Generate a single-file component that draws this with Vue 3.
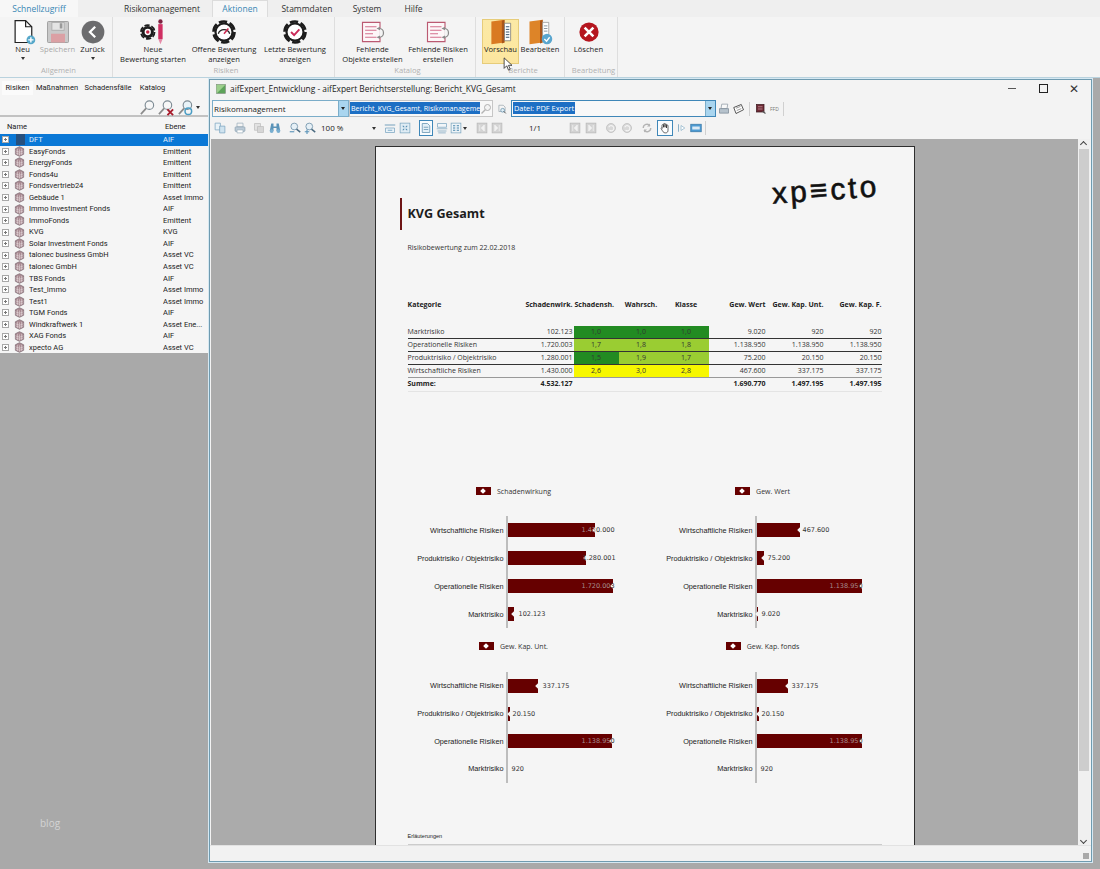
<script setup>
const tabs = ['Risikomanagement', 'Aktionen', 'Stammdaten', 'System', 'Hilfe']

const groups = [
  { name: 'Allgemein', cls: 'g1', btns: [
    { icon: 'neu', lines: ['Neu'], w: 35, arrow: true },
    { icon: 'save', lines: ['Speichern'], w: 35, off: true },
    { icon: 'back', lines: ['Zurück'], w: 35, arrow: true },
  ] },
  { name: 'Risiken', cls: 'g2', btns: [
    { icon: 'gearpen', lines: ['Neue', 'Bewertung starten'], w: 70 },
    { icon: 'open', lines: ['Offene Bewertung', 'anzeigen'], w: 72 },
    { icon: 'last', lines: ['Letzte Bewertung', 'anzeigen'], w: 70 },
  ] },
  { name: 'Katalog', cls: 'g3', btns: [
    { icon: 'missing', lines: ['Fehlende', 'Objekte erstellen'], w: 65 },
    { icon: 'missing', lines: ['Fehlende Risiken', 'erstellen'], w: 66 },
  ] },
  { name: 'Berichte', cls: 'g4', btns: [
    { icon: 'book', lines: ['Vorschau'], w: 37, hot: true },
    { icon: 'bookedit', lines: ['Bearbeiten'], w: 42 },
  ] },
  { name: 'Bearbeitung', cls: 'g5', btns: [
    { icon: 'del', lines: ['Löschen'], w: 37 },
  ] },
]

const tree = [
  ['DFT', 'AIF'], ['EasyFonds', 'Emittent'], ['EnergyFonds', 'Emittent'], ['Fonds4u', 'Emittent'],
  ['Fondsvertrieb24', 'Emittent'], ['Gebäude 1', 'Asset Immo'], ['Immo Investment Fonds', 'AIF'],
  ['ImmoFonds', 'Emittent'], ['KVG', 'KVG'], ['Solar Investment Fonds', 'AIF'],
  ['talonec business GmbH', 'Asset VC'], ['talonec GmbH', 'Asset VC'], ['TBS Fonds', 'AIF'],
  ['Test_Immo', 'Asset Immo'], ['Test1', 'Asset Immo'], ['TGM Fonds', 'AIF'],
  ['Windkraftwerk 1', 'Asset Ene...'], ['XAG Fonds', 'AIF'], ['xpecto AG', 'Asset VC'],
]

const rawBar = [
  { x: 215, w: 12, icon: 'copy' }, { x: 235, w: 12, icon: 'print' }, { x: 254, w: 12, icon: 'pages', dim: true },
  { x: 270, w: 12, icon: 'binoc' }, { x: 290, w: 12, icon: 'zoomout' }, { x: 305, w: 12, icon: 'zoomin' },
  { x: 322, w: 50, text: '100 %' }, { x: 373, w: 5, caret: true },
  { x: 385, w: 12, icon: 'fitw' }, { x: 400, w: 12, icon: 'fitp' },
  { x: 420, w: 14, icon: 'single', active: true }, { x: 437, w: 12, icon: 'facing' }, { x: 451, w: 12, icon: 'multi' },
  { x: 464, w: 5, caret: true }, { x: 477, w: 12, icon: 'first', dim: true }, { x: 492, w: 12, icon: 'next', dim: true },
  { x: 530, w: 14, text: '1/1' }, { x: 570, w: 12, icon: 'first', dim: true }, { x: 586, w: 12, icon: 'next', dim: true },
  { x: 606, w: 12, icon: 'undo', dim: true }, { x: 622, w: 12, icon: 'undo', dim: true },
  { x: 642, w: 12, icon: 'refresh', dim: true }, { x: 658, w: 16, icon: 'hand', active: true },
  { x: 677, w: 10, icon: 'sel' }, { x: 691, w: 12, icon: 'snap' }, { x: 706, w: 1, sep: true },
]
const bar = rawBar.map((it, i) => ({
  ...it,
  gap: it.x - (i ? rawBar[i - 1].x + rawBar[i - 1].w : 211),
}))

const head = ['Kategorie', 'Schadenwirk.', 'Schadensh.', 'Wahrsch.', 'Klasse', 'Gew. Wert', 'Gew. Kap. Unt.', 'Gew. Kap. F.']
const rows = [
  { cat: 'Marktrisiko', sw: '102.123', a: ['1,0', 'd'], b: ['1,0', 'd'], c: ['1,0', 'd'], w: '9.020', u: '920', f: '920' },
  { cat: 'Operationelle Risiken', sw: '1.720.003', a: ['1,7', 'l'], b: ['1,8', 'l'], c: ['1,8', 'l'], w: '1.138.950', u: '1.138.950', f: '1.138.950' },
  { cat: 'Produktrisiko / Objektrisiko', sw: '1.280.001', a: ['1,5', 'd'], b: ['1,9', 'l'], c: ['1,7', 'l'], w: '75.200', u: '20.150', f: '20.150' },
  { cat: 'Wirtschaftliche Risiken', sw: '1.430.000', a: ['2,6', 'y'], b: ['3,0', 'y'], c: ['2,8', 'y'], w: '467.600', u: '337.175', f: '337.175' },
]

const L = ['Wirtschaftliche Risiken', 'Produktrisiko / Objektrisiko', 'Operationelle Risiken', 'Marktrisiko']
const mk = (title, data) => ({
  title,
  rows: data.map((d, i) => ({
    label: L[i], w: d[0], v: d[1], gap: d[2] - d[0],
    inner: d[1].slice(0, d[3] || 0), outer: d[1].slice(d[3] || 0),
  })),
})
const charts = [
  mk('Schadenwirkung', [[87, '1.430.000', 74, 4], [78, '1.280.001', 75, 0], [105, '1.720.003', 74, 8], [6, '102.123', 11, 0]]),
  mk('Gew. Wert', [[43, '467.600', 46, 0], [7, '75.200', 11, 0], [105, '1.138.950', 73, 8], [1, '9.020', 5, 0]]),
  mk('Gew. Kap. Unt.', [[30, '337.175', 35, 0], [2, '20.150', 5, 0], [104, '1.138.950', 74, 8], [0, '920', 4, 0]]),
  mk('Gew. Kap. fonds', [[31, '337.175', 35, 0], [2, '20.150', 5, 0], [105, '1.138.950', 73, 8], [0, '920', 4, 0]]),
]
</script>

<template>
  <div class="desktop">
    <svg class="defs" xmlns="http://www.w3.org/2000/svg">
      <symbol id="i-neu" viewBox="0 0 32 32">
        <path d="M7 3h12l7 7v18H7z" fill="#fff" stroke="#222" stroke-width="1.4"/>
        <path d="M19 3v7h7" fill="none" stroke="#222" stroke-width="1.4"/>
        <circle cx="25" cy="25" r="5" fill="#55a7c9"/>
        <path d="M25 22v6M22 25h6" stroke="#fff" stroke-width="1.6"/>
      </symbol>
      <symbol id="i-save" viewBox="0 0 32 32">
        <rect x="4" y="4" width="24" height="24" rx="1" fill="#c9c9c9" stroke="#9a9a9a"/>
        <rect x="9" y="5" width="14" height="9" fill="#e4e4e4" stroke="#aaa"/>
        <rect x="18" y="6" width="3" height="6" fill="#999"/>
        <rect x="8" y="18" width="16" height="10" fill="#dba0a4"/>
      </symbol>
      <symbol id="i-back" viewBox="0 0 32 32">
        <circle cx="16" cy="16" r="13" fill="#6c6c6e"/>
        <path d="M18.500 10l-6 6 6 6" fill="none" stroke="#fff" stroke-width="2.600"/>
      </symbol>
      <symbol id="i-gearpen" viewBox="0 0 32 32">
        <circle cx="10" cy="16" r="7" fill="#1c1c1c"/>
        <circle cx="10" cy="16" r="7.800" fill="none" stroke="#1c1c1c" stroke-width="2" stroke-dasharray="6 2.170"/>
        <circle cx="10" cy="16" r="3.600" fill="#fff"/>
        <circle cx="10" cy="16" r="2" fill="#c22a4a"/>
        <rect x="22" y="7" width="5" height="17" fill="#cf2f62"/>
        <circle cx="24.500" cy="4" r="2.500" fill="#7c2340"/>
        <path d="M22 24h5l-2.500 6z" fill="#e58aa8"/>
      </symbol>
      <symbol id="i-open" viewBox="0 0 32 32">
        <circle cx="16" cy="16" r="11" fill="#1c1c1c"/>
        <circle cx="16" cy="16" r="12" fill="none" stroke="#1c1c1c" stroke-width="3" stroke-dasharray="9.500 3.070"/>
        <circle cx="16" cy="16" r="8.500" fill="#fff"/>
        <path d="M9.500 18a6.800 6.800 0 0 1 13 0" fill="none" stroke="#222" stroke-width="1.500"/>
        <path d="M16 18l5-6" stroke="#d02a52" stroke-width="1.800"/>
      </symbol>
      <symbol id="i-last" viewBox="0 0 32 32">
        <circle cx="16" cy="16" r="11" fill="#1c1c1c"/>
        <circle cx="16" cy="16" r="12" fill="none" stroke="#1c1c1c" stroke-width="3" stroke-dasharray="9.500 3.070"/>
        <circle cx="16" cy="16" r="8.500" fill="#fff"/>
        <path d="M11.500 16l3.500 3.500 6-6.500" fill="none" stroke="#c92a58" stroke-width="2.200"/>
      </symbol>
      <symbol id="i-missing" viewBox="0 0 32 32">
        <path d="M4 5h20v22H4z" fill="#fdf7f8" stroke="#bb5a72" stroke-width="1.300"/>
        <path d="M7 10h13M7 14h13M7 18h9M7 22h13" stroke="#d4708c" stroke-width="1.300"/>
        <path d="M23 12a5 5 0 0 1 5 5 5 5 0 0 1-5 5" fill="#f4f4f4" stroke="#8a8a8a" stroke-width="1.400"/>
        <path d="M20 12l4-2v4zM20 22l4-2v4z" fill="#8a8a8a"/>
      </symbol>
      <symbol id="i-book" viewBox="0 0 32 32">
        <path d="M5 4l15-2v26L5 30z" fill="#d97a22"/>
        <path d="M20 2v26l-3 1V3z" fill="#a9551a"/>
        <path d="M20 6h7v20h-7z" fill="#fff" stroke="#6b6b6b" stroke-width=".8"/>
        <path d="M21.500 10h4M21.500 13h4M21.500 16h4M21.500 19h4M21.500 22h4" stroke="#34506b" stroke-width="1.100"/>
      </symbol>
      <symbol id="i-bookedit" viewBox="0 0 32 32">
        <path d="M4 4l15-2v26L4 30z" fill="#dd8428"/>
        <path d="M19 2v26l-3 1V3z" fill="#a9551a"/>
        <path d="M19 5h7v18h-7z" fill="#fff" stroke="#8a8a8a" stroke-width=".8"/>
        <path d="M20.500 9h4M20.500 12h4M20.500 15h4" stroke="#7a8a99"/>
        <circle cx="24" cy="24" r="6" fill="#5aa6cf"/>
        <path d="M21 24l2.500 2.500 3.500-4.500" fill="none" stroke="#fff" stroke-width="1.500"/>
      </symbol>
      <symbol id="i-del" viewBox="0 0 32 32">
        <circle cx="16" cy="16" r="11" fill="#b5161f"/>
        <path d="M11 11l10 10M21 11L11 21" stroke="#fff" stroke-width="3"/>
      </symbol>
      <symbol id="i-cube" viewBox="0 0 16 16">
        <path d="M2 4l6-3 6 3v8l-6 3-6-3z" fill="#a98a92" stroke="#76626a"/>
        <path d="M8 5v9M5 4v9M11 4v9M2 7l6 2 6-2M2 10l6 2 6-2" stroke="#ece4e6" stroke-width=".7" fill="none"/>
      </symbol>
      <symbol id="i-lens" viewBox="0 0 18 18">
        <circle cx="11" cy="6.500" r="4.500" fill="#f7f7f7" stroke="#7d8b94" stroke-width="1.200"/>
        <path d="M7.500 10L2 16" stroke="#8b8b8b" stroke-width="1.800"/>
      </symbol>
      <symbol id="i-lensx" viewBox="0 0 18 18">
        <circle cx="10" cy="6.500" r="4.500" fill="#f7f7f7" stroke="#7d8b94" stroke-width="1.200"/>
        <path d="M6.500 10L1 16" stroke="#8b8b8b" stroke-width="1.800"/>
        <path d="M10 11l6 6M16 11l-6 6" stroke="#a81c2c" stroke-width="2"/>
      </symbol>
      <symbol id="i-lensb" viewBox="0 0 18 18">
        <circle cx="11" cy="6.500" r="4.500" fill="#e9f3f8" stroke="#7d8b94" stroke-width="1.200"/>
        <path d="M7.500 10L2 16" stroke="#8b8b8b" stroke-width="1.800"/>
        <circle cx="12" cy="13" r="3.500" fill="none" stroke="#4b9dc4" stroke-width="1.600"/>
      </symbol>
      <symbol id="i-copy" viewBox="0 0 16 16">
        <path d="M1.500 1.500h7v9h-7z" fill="#eaf3f8" stroke="#7ca6c0"/>
        <path d="M7.500 5.500h7v9h-7z" fill="#cfe3ef" stroke="#7ca6c0"/>
      </symbol>
      <symbol id="i-print" viewBox="0 0 16 16">
        <path d="M4 1.500h8v5H4z" fill="#f4f4f4" stroke="#9db0be"/>
        <rect x="1.500" y="6.500" width="13" height="6" rx="1" fill="#bccbd7" stroke="#8ba0b0"/>
        <path d="M4 10.500h8v4H4z" fill="#fff" stroke="#9db0be"/>
      </symbol>
      <symbol id="i-pages" viewBox="0 0 16 16">
        <path d="M2 2h8v9H2z" fill="#e2e2e2" stroke="#bdbdbd"/>
        <path d="M6 6h8v8H6z" fill="#d6d6d6" stroke="#bdbdbd"/>
      </symbol>
      <symbol id="i-binoc" viewBox="0 0 16 16">
        <path d="M3 2h3v4h4V2h3l2 10h-5V8H6v4H1z" fill="#5a93b8"/>
        <circle cx="3.500" cy="12" r="2.500" fill="#78aed0"/>
        <circle cx="12.500" cy="12" r="2.500" fill="#78aed0"/>
      </symbol>
      <symbol id="i-zoomout" viewBox="0 0 16 16">
        <circle cx="7" cy="6" r="4.500" fill="#e6f0f6" stroke="#7899af" stroke-width="1.200"/>
        <path d="M10 9.500l5 4" stroke="#4a6a80" stroke-width="1.800"/>
        <path d="M1 13h6" stroke="#5a93b8" stroke-width="1.500"/>
      </symbol>
      <symbol id="i-zoomin" viewBox="0 0 16 16">
        <circle cx="7" cy="6" r="4.500" fill="#e6f0f6" stroke="#7899af" stroke-width="1.200"/>
        <path d="M10 9.500l5 4" stroke="#4a6a80" stroke-width="1.800"/>
        <path d="M1 13h6M4 10v6" stroke="#5a93b8" stroke-width="1.500"/>
      </symbol>
      <symbol id="i-fitw" viewBox="0 0 16 16">
        <path d="M1 4h14" stroke="#7ca6c0" stroke-width="1.400"/>
        <path d="M2 8h12v6H2z" fill="#eaf3f8" stroke="#7ca6c0"/>
        <path d="M5 11h6" stroke="#5a93b8"/>
      </symbol>
      <symbol id="i-fitp" viewBox="0 0 16 16">
        <rect x="1.500" y="1.500" width="13" height="13" fill="#dfecf4" stroke="#7ca6c0"/>
        <path d="M5 5l2 2M11 5L9 7M5 11l2-2M11 11L9 9" stroke="#4a86ac" stroke-width="1.400"/>
      </symbol>
      <symbol id="i-single" viewBox="0 0 16 16">
        <path d="M3 2h7l3 3v9H3z" fill="#e3eff6" stroke="#5f8fae"/>
        <path d="M5 7h6M5 10h6" stroke="#5f8fae"/>
      </symbol>
      <symbol id="i-facing" viewBox="0 0 16 16">
        <path d="M2 2h12v5H2z" fill="#f2f6f9" stroke="#7ca6c0"/>
        <path d="M1 9h14M2 12h12M3 14.500h10" stroke="#7ca6c0"/>
      </symbol>
      <symbol id="i-multi" viewBox="0 0 16 16">
        <rect x="1.500" y="1.500" width="13" height="13" fill="#eef4f8" stroke="#7ca6c0"/>
        <path d="M4 5h3M9 5h3M4 8h3M9 8h3M4 11h3M9 11h3" stroke="#4a86ac" stroke-width="1.400"/>
      </symbol>
      <symbol id="i-first" viewBox="0 0 16 16">
        <rect x="1.500" y="1.500" width="13" height="13" fill="#d3d3d3" stroke="#b8b8b8"/>
        <path d="M5 4v8M11 4L7 8l4 4z" fill="#f2f2f2" stroke="#f2f2f2"/>
      </symbol>
      <symbol id="i-next" viewBox="0 0 16 16">
        <rect x="1.500" y="1.500" width="13" height="13" fill="#d3d3d3" stroke="#b8b8b8"/>
        <path d="M11 4v8M5 4l4 4-4 4z" fill="#f2f2f2" stroke="#f2f2f2"/>
      </symbol>
      <symbol id="i-undo" viewBox="0 0 16 16">
        <circle cx="8" cy="8" r="6" fill="#d8d8d8" stroke="#bcbcbc"/>
        <path d="M5 7a3.500 3.500 0 1 1 1 4" fill="none" stroke="#f5f5f5" stroke-width="1.400"/>
      </symbol>
      <symbol id="i-refresh" viewBox="0 0 16 16">
        <path d="M13 8a5 5 0 0 1-9 3M3 8a5 5 0 0 1 9-3" fill="none" stroke="#b4b4b4" stroke-width="1.800"/>
        <path d="M12 2v4H8zM4 14v-4h4z" fill="#b4b4b4"/>
      </symbol>
      <symbol id="i-hand" viewBox="0 0 16 16">
        <path d="M4 8V4.500a1 1 0 0 1 2 0V7V3a1 1 0 0 1 2 0v4V3.500a1 1 0 0 1 2 0V8V5a1 1 0 0 1 2 0v6c0 2-1 3.500-3 3.500H8c-2 0-3-2-5-5.500-.5-1 .8-1.600 1.500-.8z" fill="#fff" stroke="#222" stroke-width=".9"/>
      </symbol>
      <symbol id="i-sel" viewBox="0 0 16 16">
        <path d="M4 2v12" stroke="#7ca6c0" stroke-width="1.400"/>
        <path d="M8 4l6 4-6 4z" fill="#fff" stroke="#7ca6c0"/>
      </symbol>
      <symbol id="i-snap" viewBox="0 0 16 16">
        <rect x="1" y="3" width="14" height="10" fill="#4c9ad2" stroke="#3c7aa8"/>
        <rect x="3" y="6" width="10" height="4" fill="#dbeaf5"/>
      </symbol>
      <symbol id="i-mag" viewBox="0 0 16 16">
        <circle cx="10" cy="6" r="4" fill="#f4f4f4" stroke="#a9a9a9" stroke-width="1.200"/>
        <path d="M7 9l-5 5" stroke="#b4b4b4" stroke-width="1.800"/>
      </symbol>
      <symbol id="i-doclens" viewBox="0 0 16 16">
        <path d="M3 2h7l3 3v7H3z" fill="#f4f4f4" stroke="#8d9aa4"/>
        <circle cx="9" cy="10" r="3" fill="#e2eef5" stroke="#4b7f9f"/>
        <path d="M11 12l3 3" stroke="#333" stroke-width="1.400"/>
      </symbol>
      <symbol id="i-printer" viewBox="0 0 16 16">
        <path d="M5 1.500h8l-1 6H4z" fill="#f8f8f8" stroke="#8f9ba5"/>
        <path d="M2 7.500h12v6H2z" fill="#b6c2cc" stroke="#7c8a96"/>
      </symbol>
      <symbol id="i-mail" viewBox="0 0 16 16">
        <path d="M1 6l10-4 3 7-10 5z" fill="#fff" stroke="#222"/>
        <path d="M4 7l6-2.500M5 10l6-2.500" stroke="#555" stroke-width=".8"/>
      </symbol>
      <symbol id="i-ffd" viewBox="0 0 16 16">
        <rect x="2" y="2" width="10" height="10" fill="#6e2a35" stroke="#3c1a20"/>
        <path d="M4 5h6M4 8h6" stroke="#c99aa2"/>
        <path d="M10 11l4 3" stroke="#555" stroke-width="1.500"/>
      </symbol>
      <symbol id="i-app" viewBox="0 0 16 16">
        <rect x="1" y="1" width="14" height="14" fill="#5da35a" stroke="#7c8a7a"/>
        <path d="M1 1h14L1 15z" fill="#9ccf8c"/>
      </symbol>
    </svg>

    <header class="ribbon">
      <nav class="tabs">
        <span class="tab quick">Schnellzugriff</span>
        <span
          v-for="t in tabs"
          :key="t"
          class="tab"
          :class="{ current: t === 'Aktionen' }"
        >{{ t }}</span>
      </nav>
      <div class="groups">
        <section v-for="g in groups" :key="g.name" class="group" :class="g.cls">
          <div class="btns">
            <div
              v-for="b in g.btns"
              :key="b.lines.join()"
              class="rbtn"
              :class="{ off: b.off, hot: b.hot }"
              :style="{ width: b.w + 'px' }"
            >
              <svg class="ricon"><use :href="'#i-' + b.icon" /></svg>
              <span v-for="l in b.lines" :key="l" class="rlabel">{{ l }}</span>
              <span v-if="b.arrow" class="rcaret"></span>
              <svg v-if="b.hot" class="cursor" viewBox="0 0 12 16">
                <path d="M1 1v12l3-3 2 5 2-1-2-4.500h4z" fill="#fff" stroke="#222" stroke-width=".9"/>
              </svg>
            </div>
          </div>
          <div class="gname">{{ g.name }}</div>
        </section>
      </div>
    </header>

    <aside class="side">
      <div class="panel">
        <nav class="stabs">
          <span class="stab active">Risiken</span>
          <span class="stab s2">Maßnahmen</span>
          <span class="stab s3">Schadensfälle</span>
          <span class="stab s4">Katalog</span>
        </nav>
        <div class="searchbar">
          <svg class="lens"><use href="#i-lens" /></svg>
          <svg class="lens"><use href="#i-lensx" /></svg>
          <svg class="lens"><use href="#i-lensb" /></svg>
          <span class="mini-caret"></span>
        </div>
        <div class="thead"><span>Name</span><span>Ebene</span></div>
        <div
          v-for="(r, i) in tree"
          :key="r[0]"
          class="trow"
          :class="{ sel: i === 0 }"
        >
          <span class="plus"></span>
          <svg v-if="i" class="cube"><use href="#i-cube" /></svg>
          <span v-else class="cube dark"></span>
          <span class="tname">{{ r[0] }}</span>
          <span class="tlevel">{{ r[1] }}</span>
        </div>
      </div>
      <div class="blog">blog</div>
    </aside>

    <section class="win">
      <div class="titlebar">
        <svg class="appicon"><use href="#i-app" /></svg>
        <span class="wtitle">aifExpert_Entwicklung - aifExpert Berichtserstellung: Bericht_KVG_Gesamt</span>
        <div class="wctl">
          <span class="c-min"></span>
          <span class="c-max"></span>
          <span class="c-close">✕</span>
        </div>
      </div>

      <div class="bar1">
        <div class="combo c1">
          <span class="ctext">Risikomanagement</span>
          <span class="cbtn"></span>
        </div>
        <div class="combo c2">
          <span class="clip"><span class="picked">Bericht_KVG_Gesamt, Risikomanagement</span></span>
          <svg class="s12"><use href="#i-mag" /></svg>
        </div>
        <svg class="s10 ml4"><use href="#i-doclens" /></svg>
        <div class="combo c3">
          <span class="ctext"><span class="picked">Datei: PDF Export</span></span>
          <span class="cbtn"></span>
        </div>
        <svg class="s12 ml2"><use href="#i-printer" /></svg>
        <svg class="s12 ml3"><use href="#i-mail" /></svg>
        <span class="vsep ml4"></span>
        <svg class="s12 ml5"><use href="#i-ffd" /></svg>
        <span class="ffd">FFD</span>
        <span class="vsep ml4"></span>
      </div>

      <div class="bar2">
        <template v-for="(t, i) in bar" :key="i">
          <span v-if="t.text" class="btext" :style="{ marginLeft: t.gap + 'px', width: t.w + 'px' }">{{ t.text }}</span>
          <span v-else-if="t.caret" class="mini-caret" :style="{ marginLeft: t.gap + 'px', width: t.w + 'px' }"></span>
          <span v-else-if="t.sep" class="vsep" :style="{ marginLeft: t.gap + 'px' }"></span>
          <span
            v-else
            class="tool"
            :class="{ active: t.active }"
            :style="{ marginLeft: t.gap + 'px', width: t.w + 'px' }"
          ><svg><use :href="'#i-' + t.icon" /></svg></span>
        </template>
      </div>

      <div class="canvas">
        <div class="viewport">
          <article class="page">
            <div class="rhead">
              <div class="rtitle"><h1>KVG Gesamt</h1></div>
              <div class="logo">xp≡cto</div>
            </div>
            <p class="rdate">Risikobewertung zum 22.02.2018</p>

            <div class="table">
              <div class="tr th">
                <span class="left">{{ head[0] }}</span>
                <span class="num">{{ head[1] }}</span>
                <span class="sh">{{ head[2] }}</span>
                <span class="mid">{{ head[3] }}</span>
                <span class="mid">{{ head[4] }}</span>
                <span>{{ head[5] }}</span>
                <span>{{ head[6] }}</span>
                <span>{{ head[7] }}</span>
              </div>
              <div v-for="r in rows" :key="r.cat" class="tr td">
                <span class="left">{{ r.cat }}</span>
                <span class="num">{{ r.sw }}</span>
                <span class="heat" :class="r.a[1]">{{ r.a[0] }}</span>
                <span class="heat" :class="r.b[1]">{{ r.b[0] }}</span>
                <span class="heat" :class="r.c[1]">{{ r.c[0] }}</span>
                <span>{{ r.w }}</span>
                <span>{{ r.u }}</span>
                <span>{{ r.f }}</span>
              </div>
              <div class="tr sum">
                <span class="left">Summe:</span>
                <span class="num">4.532.127</span>
                <span></span><span></span><span></span>
                <span>1.690.770</span>
                <span>1.497.195</span>
                <span>1.497.195</span>
              </div>
            </div>

            <div class="charts">
              <div v-for="c in charts" :key="c.title" class="chart">
                <div class="legend">
                  <span class="swatch"></span>
                  <span>{{ c.title }}</span>
                </div>
                <div class="plot">
                  <div v-for="r in c.rows" :key="r.label" class="crow">
                    <span class="clabel">{{ r.label }}</span>
                    <div class="cbar">
                      <span v-if="r.w" class="fill" :style="{ width: r.w + 'px' }"></span>
                      <span class="cval" :style="{ marginLeft: r.gap + 'px' }"><span class="in">{{ r.inner }}</span>{{ r.outer }}</span>
                    </div>
                  </div>
                </div>
              </div>
            </div>

            <div class="notes">
              <div class="ntitle">Erläuterungen</div>
              <div class="nrow">
                <span>Objekt</span><span>Zielgruppe</span><span>Case</span><span>Produktrisiko / Objektrisiko</span><span>Wahrscheinlichkeit</span>
              </div>
            </div>
          </article>
        </div>
        <div class="scroll">
          <span class="arrow up"></span>
          <span class="thumb"></span>
          <span class="arrow down"></span>
        </div>
      </div>

      <footer class="status"><span class="grip"></span></footer>
    </section>
  </div>
</template>

<style>
html, body { margin: 0; background: #a9a9a9; }
</style>

<style scoped>
.desktop {
  position: relative;
  width: 1100px;
  height: 869px;
  overflow: hidden;
  background: #a9a9a9;
  font-family: "Open Sans", sans-serif;
  font-size: 8px;
  color: #222;
}
.defs { display: none; }

/* ribbon */
.ribbon { height: 78px; box-sizing: border-box; background: #f4f4f4; border-bottom: 1px solid #b9d2de; }
.tabs { display: grid; grid-template-columns: 112px 100px 56px 78px 42px 51px; height: 17px; background: #efefef; }
.tab { font-size: 8.500px; line-height: 17px; text-align: center; color: #333; white-space: nowrap; }
.tab.quick { width: 78px; color: #3a87b5; background: #f7f7f7; }
.tab.current { box-sizing: border-box; color: #3a87b5; background: #f7f7f7; border: 1px solid #dcdcdc; border-bottom: 0; line-height: 15px; }
.groups { display: flex; height: 60px; }
.group { display: flex; flex-direction: column; border-right: 1px solid #dedede; box-sizing: border-box; }
.g1 { width: 113px; padding-left: 5px; }
.g2 { width: 222px; padding-left: 5px; }
.g3 { width: 141px; padding-left: 5px; }
.g4 { width: 89px; padding-left: 6px; }
.g5 { width: 53px; padding-left: 5px; }
.btns { display: flex; height: 48px; padding-top: 2px; box-sizing: border-box; }
.rbtn { position: relative; display: flex; flex-direction: column; align-items: center; height: 45px; box-sizing: border-box; }
.rbtn.off { color: #a8a8a8; }
.rbtn.hot { background: linear-gradient(#fbe9a6, #fde8a0 70%, #fbe5a0); outline: 1px solid #e6cc7a; outline-offset: -1px; }
.ricon { width: 28px; height: 28px; margin: -1px 0 -2px; flex: none; }
.rlabel { font-size: 7.600px; line-height: 10px; white-space: nowrap; }
.rcaret { width: 0; height: 0; margin-top: 3px; border: 2px solid transparent; border-top: 3px solid #333; border-bottom: 0; }
.cursor { position: absolute; left: 21px; top: 38px; width: 11px; height: 14px; }
.gname { font-size: 7.600px; line-height: 10px; text-align: center; color: #b0b0b0; }

/* left panel */
.side { width: 208px; font-family: Roboto, sans-serif; font-size: 7.500px; }
.panel { background: #f5f5f5; }
.stabs { display: flex; height: 17px; align-items: flex-end; }
.stab { line-height: 14px; text-align: center; }
.stab.active { width: 31px; margin-left: 2px; background: #fbfbfb; }
.s2 { width: 48px; }
.s3 { width: 54px; }
.s4 { width: 35px; }
.searchbar { display: flex; justify-content: flex-end; align-items: center; gap: 2px; height: 16px; padding: 4px 7px 0 0; border-bottom: 2px solid #c2c2c2; }
.lens { width: 17px; height: 17px; flex: none; }
.mini-caret { display: inline-flex; width: 5px; height: 0; border: 0; position: relative; }
.mini-caret::after { content: ""; position: absolute; left: 0; top: -1px; border: 2px solid transparent; border-top: 3px solid #333; border-bottom: 0; }
.thead { display: grid; grid-template-columns: 158px 1fr; height: 17px; line-height: 20px; padding-left: 7px; box-sizing: border-box; }
.trow { display: grid; grid-template-columns: 14px 15px 134px 45px; height: 11.550px; line-height: 11.550px; align-items: center; }
.trow.sel { background: #0a78d6; color: #e9f3fc; }
.plus { position: relative; width: 5px; height: 5px; margin-left: 2px; border: 1px solid #a8a8a8; background: #fff; box-sizing: content-box; }
.plus::after { content: ""; position: absolute; left: 1px; top: 2px; width: 3px; height: 1px; background: #777; }
.plus::before { content: ""; position: absolute; left: 2px; top: 1px; width: 1px; height: 3px; background: #777; }
.cube { width: 11px; height: 11px; }
.cube.dark { background: #26507e; margin-left: 2px; width: 9px; }
.tname, .tlevel { white-space: nowrap; overflow: hidden; }
.blog { margin: 463px 0 0 40px; font-family: "Open Sans", sans-serif; font-size: 10px; line-height: 14px; color: #d4d4d4; }

/* window */
.win {
  position: absolute;
  left: 209px;
  top: 79px;
  width: 883px;
  height: 783px;
  display: flex;
  flex-direction: column;
  box-sizing: border-box;
  background: #f3f3f3;
  border: 1px solid #6f9bb0;
  box-shadow: 0 0 0 1px #d5e8f2;
}
.titlebar { display: flex; align-items: center; height: 17px; padding-left: 6px; flex: none; }
.appicon { width: 10px; height: 10px; }
.wtitle { margin-left: 4px; font-size: 8.400px; white-space: nowrap; }
.wctl { display: flex; align-items: center; margin-left: auto; padding-right: 12px; }
.c-min { width: 8px; height: 1px; background: #555; }
.c-max { width: 7px; height: 7px; margin-left: 23px; border: 1px solid #222; }
.c-close { margin-left: 21px; font-size: 12px; line-height: 12px; color: #333; }

.bar1 { display: flex; align-items: center; height: 17px; margin-top: 3px; padding-left: 2px; flex: none; }
.combo { display: flex; align-items: stretch; height: 17px; box-sizing: border-box; border: 1px solid #7badc9; background: #f8f8f8; line-height: 15px; white-space: nowrap; }
.ctext { flex: 1; padding-left: 1px; overflow: hidden; }
.cbtn { position: relative; width: 9px; background: #a9d5ef; border-left: 1px solid #7badc9; }
.cbtn::after { content: ""; position: absolute; left: 2px; top: 6px; border: 2px solid transparent; border-top: 3px solid #222; border-bottom: 0; }
.c1 { width: 137px; }
.c2 { width: 144px; border-color: #c6c6c6; align-items: center; }
.clip { width: 130px; overflow: hidden; font-size: 7.100px; }
.c3 { width: 205px; margin-left: 4px; border-color: #3f87b8; font-size: 7.400px; }
.picked { background: #1d6fc4; color: #fff; padding: 1px; }
.s12 { width: 12px; height: 12px; flex: none; }
.s10 { width: 10px; height: 12px; flex: none; }
.ml2 { margin-left: 2px; }
.ml3 { margin-left: 3px; }
.ml4 { margin-left: 4px; }
.ml5 { margin-left: 5px; }
.vsep { width: 1px; height: 14px; background: #d0d0d0; flex: none; }
.ffd { margin-left: 3px; font-size: 5px; color: #777; }

.bar2 { display: flex; align-items: center; height: 17px; margin-top: 2px; flex: none; }
.btext { font-size: 8px; white-space: nowrap; }
.tool { display: inline-flex; align-items: center; justify-content: center; height: 14px; flex: none; box-sizing: border-box; }
.tool svg { width: 12px; height: 12px; }
.tool.active { border: 1px solid #3f87b8; background: #f9fcfe; height: 16px; }

.canvas { display: flex; flex: 1; min-height: 0; margin: 3px 1px 0; background: #ababab; }
.viewport { flex: 1; display: flex; justify-content: center; overflow: hidden; padding-top: 7px; }
.page {
  width: 540px;
  height: 699px;
  padding: 0 32px 0 24px;
  overflow: hidden;
  box-sizing: border-box;
  background: #f5f5f5;
  border: 1px solid #2e2e2e;
  border-bottom: 0;
  flex: none;
}
.scroll { display: flex; flex-direction: column; align-items: center; width: 12px; background: #f0f0f0; }
.arrow { width: 12px; height: 10px; position: relative; flex: none; }
.arrow::after { content: ""; position: absolute; left: 3px; top: 3px; width: 4px; height: 4px; border-left: 1px solid #444; border-top: 1px solid #444; transform: rotate(45deg); }
.arrow.down::after { transform: rotate(225deg); }
.thumb { width: 10px; height: 622px; background: #cdcdcd; }
.arrow.down { margin-top: auto; }
.status { height: 16px; flex: none; position: relative; background: #f2f2f2; border-top: 1px solid #e2e2e2; box-sizing: border-box; }
.grip { position: absolute; right: 2px; bottom: 2px; width: 6px; height: 6px; background: radial-gradient(circle, #aaa .8px, transparent 1px) 0 0 / 2px 2px; }

/* report */
.rhead { display: flex; justify-content: space-between; height: 55px; padding-top: 28px; box-sizing: content-box; }
.rtitle { align-self: flex-end; height: 32px; display: flex; align-items: center; padding: 0 0 2px 6px; box-sizing: border-box; border-left: 2px solid #6e1515; }
.rtitle h1 { margin: 0; font-size: 12.600px; font-weight: 700; color: #1c1c1c; }
.logo {
  align-self: flex-start;
  margin-right: 2px;
  font-family: "Liberation Sans", sans-serif;
  font-size: 30px;
  line-height: 30px;
  letter-spacing: 3px;
  color: #111;
  -webkit-text-stroke: .6px #111;
  transform: rotate(-4deg);
}
.rdate { margin: 12px 0 0 8px; font-size: 7px; line-height: 12px; color: #333; }
.table { margin: 45px 0 0 8px; width: 474px; font-size: 7px; color: #333; }
.tr { display: grid; grid-template-columns: 120px 46px 45px 45px 45px 57px 58px 58px; text-align: right; }
.num { padding-right: 1px; white-space: nowrap; }
.left { text-align: left; white-space: nowrap; }
.th { height: 27px; line-height: 12px; font-weight: 700; color: #222; }
.th .num { margin-left: -20px; }
.th .sh { text-align: left; padding-left: 1px; white-space: nowrap; }
.th .mid { text-align: center; }
.td { height: 13px; line-height: 12px; border-bottom: 1px solid #333; box-sizing: border-box; }
.td:nth-child(5) { border-bottom-color: #999; }
.heat { text-align: center; color: #333; }
.heat.d { background: #228b22; }
.heat.l { background: #9acd32; }
.heat.y { background: #f7f700; }
.sum { height: 13px; line-height: 12px; font-weight: 700; color: #222; border-bottom: 1px solid #e4e4e4; }

.charts { display: grid; grid-template-columns: 249px 225px; margin: 93px 0 0 8px; }
.legend { display: flex; align-items: center; justify-content: center; gap: 6px; width: 212px; height: 14px; margin-top: -1px; font-size: 7px; color: #333; }
.swatch { position: relative; width: 15px; height: 8px; background: #660000; }
.swatch::after { content: ""; position: absolute; left: 5px; top: 2px; width: 4px; height: 4px; background: #fff; transform: rotate(45deg); }
.plot { margin-top: 18px; }
.chart:nth-child(n + 3) { margin-top: 12px; }
.chart:nth-child(n + 3) .plot { margin-top: 19px; }
.crow { display: flex; height: 27.700px; }
.chart:nth-child(-n + 2) .crow { height: 28px; }
.clabel { align-self: center; width: 96px; margin-right: 2px; font-family: "Liberation Sans", sans-serif; font-size: 7.300px; text-align: right; white-space: nowrap; color: #222; }
.cbar { display: flex; align-items: center; border-left: 2px solid #bdbdbd; }
.fill { position: relative; height: 14px; background: #660000; flex: none; }
.fill::after { content: ""; position: absolute; right: -2px; top: 5px; width: 4px; height: 4px; background: #f5f5f5; transform: rotate(45deg); }
.cval { position: relative; font-family: "DejaVu Sans", sans-serif; font-size: 6.500px; color: #333; white-space: nowrap; }
.in { color: #a58c8c; }

.notes { margin: 48px 0 0 8px; width: 474px; }
.ntitle { font-family: "Liberation Sans", sans-serif; font-size: 5.500px; line-height: 10px; color: #222; }
.nrow { display: grid; grid-template-columns: 63px 134px 64px 90px 1fr; margin-top: 3px; padding-left: 2px; border-top: 1px solid #ccc; font-size: 5.500px; line-height: 6px; color: #666; white-space: nowrap; }
</style>
